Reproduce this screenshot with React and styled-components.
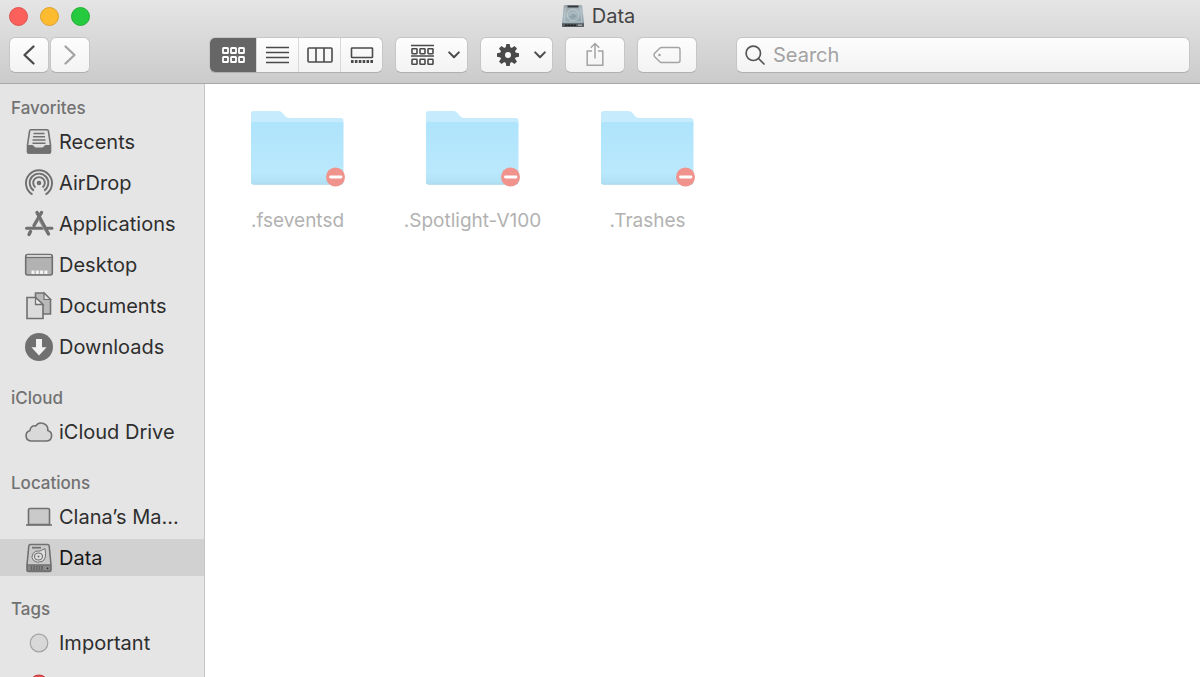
import React from "react"
import styled, { createGlobalStyle, css } from "styled-components"

const GlobalStyle = createGlobalStyle`
  * {
    box-sizing: border-box;
  }

  body {
    margin: 0;
    overflow: hidden;
    font-family: Inter, "Liberation Sans", sans-serif;
    color: #2b2b2b;
  }

  button, input {
    font: inherit;
    color: inherit;
    margin: 0;
    padding: 0;
    border: 0;
  }

  svg {
    display: block;
    flex-shrink: 0;
  }
`

const Window = styled.div`
  display: flex;
  flex-direction: column;
  height: 100vh;
  background: #fff;
`

const Header = styled.header`
  flex-shrink: 0;
  padding-bottom: 10px;
  background: linear-gradient(#e5e5e5, #cbcbcb);
  border-bottom: 1px solid #a9a9a9;
`

const TitleBar = styled.div`
  display: grid;
  grid-template-columns: 1fr auto 1fr;
  align-items: center;
  height: 32px;
  padding: 0 12px 0 9px;
`

const Lights = styled.div`
  display: flex;
  gap: 12px;
`

const Light = styled.button`
  width: 19px;
  height: 19px;
  border-radius: 50%;
  background: ${props => props.$fill};
  border: 1px solid ${props => props.$edge};
`

const Title = styled.h1`
  display: flex;
  align-items: center;
  gap: 8px;
  margin: 0;
  font-size: 20px;
  line-height: 24px;
  font-weight: 400;
  color: #444;
`

const Toolbar = styled.div`
  display: flex;
  align-items: center;
  gap: 12px;
  padding: 5px 10px 0 9px;
`

const control = css`
  height: 36px;
  border: 1px solid #c6c6c6;
  border-bottom-color: #b0b0b0;
  border-radius: 6px;
  background: linear-gradient(#fdfdfd, #f3f3f3);
`

const ToolButton = styled.button`
  ${control}
  display: flex;
  flex-shrink: 0;
  align-items: center;
  justify-content: center;
  gap: 14px;
  width: ${props => props.$width}px;
  padding-left: ${props => (props.$menu ? 8 : 0)}px;
  color: ${props => (props.$dim ? "#a3a3a3" : "#4a4a4a")};
`

const NavButtons = styled.div`
  display: flex;
  gap: 1px;
  margin-right: 107px;
`

const Segments = styled.div`
  ${control}
  display: flex;
  flex-shrink: 0;
  width: 174px;
  overflow: hidden;
`

const Segment = styled.button`
  display: flex;
  flex: 1 1 42px;
  align-items: center;
  justify-content: center;
  background: none;
  color: #4a4a4a;
  border-left: 1px solid #d8d8d8;

  ${props => props.$active && css`
    flex-basis: 46px;
    background: #666;
    color: #fff;
    border-left: 0;
  `}
`

const SearchBox = styled.label`
  ${control}
  display: flex;
  flex: 1;
  align-items: center;
  gap: 8px;
  min-width: 0;
  margin-left: 27px;
  padding: 0 8px;
  color: #555;
`

const SearchInput = styled.input`
  flex: 1;
  min-width: 0;
  background: none;
  outline: none;
  font-size: 20px;
  line-height: 24px;

  &::placeholder {
    color: #a2a2a2;
    opacity: 1;
  }
`

const Body = styled.div`
  display: flex;
  flex: 1;
  min-height: 0;
`

const Sidebar = styled.nav`
  flex-shrink: 0;
  width: 205px;
  padding-top: 14px;
  overflow: hidden;
  background: #e5e5e5;
  border-right: 1px solid #c6c6c6;
`

const Section = styled.section`
  margin-bottom: 23px;
`

const SectionTitle = styled.h2`
  margin: 0 0 5px;
  padding-left: 11px;
  font-size: 17px;
  line-height: 20px;
  font-weight: 500;
  color: #727272;
`

const Places = styled.ul`
  display: flex;
  flex-direction: column;
  gap: 4px;
  margin: 0;
  padding: 0;
  list-style: none;
`

const Place = styled.a`
  display: flex;
  align-items: center;
  gap: 5px;
  height: 37px;
  padding: 0 24px;
  font-size: 20px;
  line-height: 24px;
  color: ${props => (props.$selected ? "#161616" : "#2e2e2e")};
  background: ${props => (props.$selected ? "#d1d1d1" : "transparent")};
  text-decoration: none;
  white-space: nowrap;
`

const Files = styled.main`
  display: flex;
  flex: 1;
  flex-wrap: wrap;
  align-content: flex-start;
  padding: 24px 5px;
`

const File = styled.button`
  display: flex;
  flex-direction: column;
  align-items: center;
  gap: 21px;
  width: 175px;
  background: none;
  font-size: 19px;
  line-height: 24px;
  color: #b2b2b2;
`

const Glyph = ({ w, h, children, ...rest }) => (
  <svg
    width={w}
    height={h}
    viewBox={`0 0 ${w} ${h}`}
    fill="none"
    stroke="currentColor"
    strokeWidth="1.6"
    aria-hidden="true"
    {...rest}
  >
    {children}
  </svg>
)

const PlaceGlyph = ({ children }) => (
  <Glyph w={30} h={30} stroke="#707070">{children}</Glyph>
)

const Tiles = ({ y }) => [1, 9, 17].map(x => (
  <rect key={x} x={x} y={y} width="5" height="5" rx="0.6" />
))

const IconViewIcon = () => (
  <Glyph w={23} h={18} strokeWidth="1.8">
    <Tiles y={2} />
    <Tiles y={11} />
  </Glyph>
)

const ListViewIcon = () => (
  <Glyph w={23} h={18}>
    <path d="M0 1.5h23M0 6.5h23M0 11.5h23M0 16.5h23" />
  </Glyph>
)

const ColumnViewIcon = () => (
  <Glyph w={26} h={18}>
    <rect x="1" y="2" width="24" height="14" rx="1" />
    <path d="M9 2v14M17 2v14" />
  </Glyph>
)

const GalleryViewIcon = () => (
  <Glyph w={24} h={18}>
    <rect x="1.5" y="2" width="21" height="9.5" rx="0.6" />
    <path d="M1 15.5h22" strokeWidth="2.8" strokeDasharray="2.6 1.28" />
  </Glyph>
)

const GroupIcon = () => (
  <Glyph w={23} h={22}>
    <path d="M0 1.5h23M0 12h23" />
    <Tiles y={4.7} />
    <Tiles y={15.3} />
  </Glyph>
)

const ChevronIcon = () => (
  <Glyph w={12} h={8} strokeWidth="2" strokeLinecap="round" strokeLinejoin="round">
    <path d="M1.2 1.4 6 6.2l4.8-4.8" />
  </Glyph>
)

const ArrowIcon = ({ d }) => (
  <Glyph w={14} h={22} strokeWidth="2.3" strokeLinecap="round" strokeLinejoin="round">
    <path d={d} />
  </Glyph>
)

const GearIcon = () => (
  <Glyph w={24} h={24}>
    <circle cx="12" cy="12" r="5.5" strokeWidth="5" />
    {[0, 45, 90, 135, 180, 225, 270, 315].map(angle => (
      <path
        key={angle}
        d="M10.3 1h3.4l.7 4h-4.8z"
        fill="currentColor"
        stroke="none"
        transform={`rotate(${angle} 12 12)`}
      />
    ))}
  </Glyph>
)

const ShareIcon = () => (
  <Glyph w={18} h={26} strokeWidth="1.5">
    <path d="M6 9H1.2v14.2h15.6V9H12M9 16.5v-15M4.8 5.7 9 1.5l4.2 4.2" />
  </Glyph>
)

const TagIcon = () => (
  <Glyph w={28} h={18} strokeWidth="1.4">
    <path d="M8.5 1.5H25q2 0 2 2v11q0 2-2 2H8.5q-1 0-2-1l-5-5q-1-1.500 0-3l5-5q1-1 2-1z" />
    <circle cx="6.5" cy="9" r="1.3" fill="currentColor" stroke="none" />
  </Glyph>
)

const SearchIcon = () => (
  <Glyph w={20} h={20} strokeWidth="1.7" strokeLinecap="round">
    <circle cx="8.3" cy="8.3" r="7.2" />
    <path d="m13.5 13.5 5.500 5.500" />
  </Glyph>
)

const DiskIcon = () => (
  <Glyph w={22} h={24} stroke="none">
    <defs>
      <linearGradient id="disk-top" x1="0" y1="0" x2="0.3" y2="1">
        <stop offset="0" stopColor="#9aa3a7" />
        <stop offset="0.5" stopColor="#a9b9c0" />
        <stop offset="1" stopColor="#8b9ea7" />
      </linearGradient>
    </defs>
    <path d="M3 1h16q1 0 1.200 1L22 19v3q0 1-1 1H1q-1 0-1-1v-3L1.800 2Q2 1 3 1z" fill="url(#disk-top)" />
    <path d="M0 19.300h22V22q0 1-1 1H1q-1 0-1-1z" fill="#565c60" />
    <path d="M5.500 2.500h11" stroke="#343a3e" strokeWidth="2" />
    <path d="M3.500 3.500 2 18h18L18.500 3.500" stroke="#c2ced3" strokeWidth=".7" />
    <circle cx="11" cy="11" r="5.800" stroke="#c5d1d6" strokeWidth=".7" />
    <path d="M8 12.500q3 2.500 6-1M9.500 11h3" stroke="#7b8d96" strokeWidth=".9" />
    <path d="M3 21.200h11" stroke="#222" strokeWidth="1.600" strokeDasharray="2.500 .5" />
    <path d="M16 21.200h4" stroke="#9ba3a7" />
  </Glyph>
)

const RecentsIcon = () => (
  <PlaceGlyph>
    <path d="M7 2.800h16q1.200 0 1.400 1.200L26.500 18v7q0 1-1 1h-21q-1 0-1-1v-7L5.600 4Q5.800 2.800 7 2.800z" fill="#e0e0e0" />
    <path d="M3 18h4.500q2 0 2.500 1.300t2.500 1.300h5q2 0 2.500-1.300t2.500-1.300H27v7q0 1.800-1.800 1.800H4.800Q3 26.800 3 25z" fill="#707070" stroke="none" />
    <path d="M9.500 6.500h11M9 9.800h12M8.500 13h13M8.500 16.200h13" strokeWidth="1.400" />
  </PlaceGlyph>
)

const AirDropIcon = () => (
  <PlaceGlyph>
    <g strokeWidth="1.9">
      <path d="M8.500 26.500a13 13 0 1 1 13 0" />
      <path d="M9.800 22.600a9.300 9.300 0 1 1 10.400 0" />
      <path d="M11.500 19.500a5.800 5.800 0 1 1 7 0" />
    </g>
    <circle cx="15" cy="15" r="2.3" fill="#707070" stroke="none" />
  </PlaceGlyph>
)

const ApplicationsIcon = () => (
  <PlaceGlyph>
    <g strokeWidth="3.4" strokeLinecap="round">
      <path d="M13 3.500 24.500 25" />
      <path d="M17.500 3.500 10 16.500M6.500 22.500 5 25.500" />
    </g>
    <path d="M2.500 19.200h16M23 19.200h5" strokeWidth="3" strokeLinecap="round" />
    <path d="m14.500 10.500 6 11.200" stroke="#9a9a9a" strokeWidth="1" />
  </PlaceGlyph>
)

const DesktopIcon = () => (
  <PlaceGlyph>
    <rect x="1.7" y="4.5" width="26.6" height="20.5" rx="2" fill="#b2b2b2" />
    <path d="M3 6h24" stroke="#eee" strokeWidth="1.4" />
    <path d="M2 7.500h26" strokeWidth="1.2" />
    <path d="M7.500 22.300h16" stroke="#f4f4f4" strokeWidth="3.4" strokeDasharray="3 1.3" />
  </PlaceGlyph>
)

const DocumentsIcon = () => (
  <PlaceGlyph>
    <path d="M11.500 2h8.500l6.500 6.500V23h-15z" fill="#b9b9b9" />
    <path d="M20 2v6.500h6.500z" fill="#e3e3e3" strokeWidth="1.2" />
    <path d="M3 6.500h8.500L19 13.500v14H3z" fill="#dcdcdc" />
    <path d="M11.500 6.500v7H19z" fill="#ededed" strokeWidth="1.3" />
  </PlaceGlyph>
)

const DownloadsIcon = () => (
  <PlaceGlyph>
    <circle cx="15" cy="15" r="14" fill="#707070" stroke="none" />
    <path d="M12 7h6v8.200h4.600L15 23.500l-7.600-8.300H12z" fill="#f2f2f2" stroke="none" />
  </PlaceGlyph>
)

const CloudIcon = () => (
  <PlaceGlyph>
    <path
      d="M7 24a5.400 5.400 0 0 1-.9-10.600A4.300 4.300 0 0 1 11.600 9a6.700 6.700 0 0 1 12.200 4.500A5.400 5.400 0 0 1 23 24z"
      fill="#d9d9d9"
      strokeLinejoin="round"
    />
  </PlaceGlyph>
)

const LaptopIcon = () => (
  <PlaceGlyph>
    <path d="M4.500 22.500V8Q4.500 6.500 6 6.500h18q1.500 0 1.500 1.500v14.500z" fill="#cacaca" />
    <path d="M2 23h26" />
  </PlaceGlyph>
)

const DriveIcon = () => (
  <PlaceGlyph>
    <path d="M6.500 1.500h17q1.500 0 1.700 1.500L27 22v5q0 1.500-1.500 1.500h-21Q3 28.500 3 27v-5L4.800 3q.2-1.500 1.700-1.500z" fill="#c9c9c9" />
    <path d="M3.500 22h23v5q0 1-1 1h-21q-1 0-1-1z" fill="#8b8b8b" strokeWidth="1.3" />
    <path d="M6.500 25h13" stroke="#666" strokeWidth="4" strokeDasharray="1.7 1" />
    <path d="M8 4.700h9" strokeWidth="1.7" />
    <path d="M21 5.500q2 11-3 13-5 2-8.500-1-3-3-.5-7 2.500-3.500 7-2.500L21 5.500z" fill="#dedede" strokeWidth="1" />
    <ellipse cx="14.5" cy="13.5" rx="4" ry="3.5" strokeWidth="1.1" />
    <circle cx="14.5" cy="13.5" r="1" fill="#707070" stroke="none" />
    <circle cx="23.5" cy="25.3" r=".9" fill="#333" stroke="none" />
  </PlaceGlyph>
)

const TagDot = ({ fill, edge }) => (
  <PlaceGlyph>
    <circle cx="15" cy="15" r="8.8" fill={fill} stroke={edge} strokeWidth="1.2" />
  </PlaceGlyph>
)

const FolderIcon = () => (
  <Glyph w={96} h={80} stroke="none">
    <defs>
      <linearGradient id="folder-front" x1="0" y1="0" x2="0" y2="1">
        <stop offset="0" stopColor="#aee4fc" />
        <stop offset="0.8" stopColor="#bae8fd" />
        <stop offset="1" stopColor="#b0dff3" />
      </linearGradient>
    </defs>
    <path d="M1 16V6q0-3 3-3h24q3 0 4.500 2l2.500 3q1.500 2 4 2h51.500q3 0 3 3v4z" fill="#c5ebfd" />
    <path d="M1 16q0-2 2-2h88.500q2 0 2 2v58q0 2.500-2.500 2.500H3.500Q1 76.500 1 74z" fill="url(#folder-front)" />
    <path d="M1.500 74.800q.5 1.400 2 1.400H91q1.500 0 2-1.400" stroke="#a6d3e6" strokeWidth=".8" />
    <circle cx="85.5" cy="69" r="9.5" fill="#f0938c" />
    <path d="M80.500 69h10.500" stroke="#fff" strokeWidth="2.8" strokeLinecap="round" />
  </Glyph>
)

const views = [
  { label: "Icon view", icon: <IconViewIcon /> },
  { label: "List view", icon: <ListViewIcon /> },
  { label: "Column view", icon: <ColumnViewIcon /> },
  { label: "Gallery view", icon: <GalleryViewIcon /> },
]

const sections = [
  {
    title: "Favorites",
    places: [
      { name: "Recents", icon: <RecentsIcon /> },
      { name: "AirDrop", icon: <AirDropIcon /> },
      { name: "Applications", icon: <ApplicationsIcon /> },
      { name: "Desktop", icon: <DesktopIcon /> },
      { name: "Documents", icon: <DocumentsIcon /> },
      { name: "Downloads", icon: <DownloadsIcon /> },
    ],
  },
  {
    title: "iCloud",
    places: [{ name: "iCloud Drive", icon: <CloudIcon /> }],
  },
  {
    title: "Locations",
    places: [
      { name: "Clana’s Ma...", icon: <LaptopIcon /> },
      { name: "Data", icon: <DriveIcon />, selected: true },
    ],
  },
  {
    title: "Tags",
    places: [
      { name: "Important", icon: <TagDot fill="#d8d8d8" edge="#a3a3a3" /> },
      { label: "Red", icon: <TagDot fill="#e5524c" edge="#c63f3a" /> },
    ],
  },
]

const folders = [".fseventsd", ".Spotlight-V100", ".Trashes"]

const App = () => (
  <Window>
    <GlobalStyle />

    <Header>
      <TitleBar>
        <Lights>
          <Light aria-label="Close" $fill="#fc605b" $edge="#e0524e" />
          <Light aria-label="Minimize" $fill="#fdbc2f" $edge="#dfa02c" />
          <Light aria-label="Zoom" $fill="#25ca3f" $edge="#22ae36" />
        </Lights>
        <Title><DiskIcon />Data</Title>
      </TitleBar>

      <Toolbar>
        <NavButtons>
          <ToolButton $width={40} aria-label="Back">
            <ArrowIcon d="M11.500 2.500 2.500 11l9 8.500" />
          </ToolButton>
          <ToolButton $width={40} $dim aria-label="Forward">
            <ArrowIcon d="m2.500 2.500 9 8.500-9 8.500" />
          </ToolButton>
        </NavButtons>

        <Segments>
          {views.map((view, i) => (
            <Segment key={view.label} $active={i === 0} aria-label={view.label}>
              {view.icon}
            </Segment>
          ))}
        </Segments>

        <ToolButton $width={73} $menu aria-label="Group by"><GroupIcon /><ChevronIcon /></ToolButton>
        <ToolButton $width={73} $menu aria-label="Actions"><GearIcon /><ChevronIcon /></ToolButton>
        <ToolButton $width={60} $dim aria-label="Share"><ShareIcon /></ToolButton>
        <ToolButton $width={60} $dim aria-label="Edit tags"><TagIcon /></ToolButton>

        <SearchBox>
          <SearchIcon />
          <SearchInput type="text" placeholder="Search" aria-label="Search" />
        </SearchBox>
      </Toolbar>
    </Header>

    <Body>
      <Sidebar>
        {sections.map(({ title, places }) => (
          <Section key={title}>
            <SectionTitle>{title}</SectionTitle>
            <Places>
              {places.map(({ name, label, icon, selected }) => (
                <li key={name || label}>
                  <Place href="#" $selected={selected} aria-label={label}>
                    {icon}
                    {name}
                  </Place>
                </li>
              ))}
            </Places>
          </Section>
        ))}
      </Sidebar>

      <Files>
        {folders.map(name => (
          <File key={name}>
            <FolderIcon />
            {name}
          </File>
        ))}
      </Files>
    </Body>
  </Window>
)

export default App
